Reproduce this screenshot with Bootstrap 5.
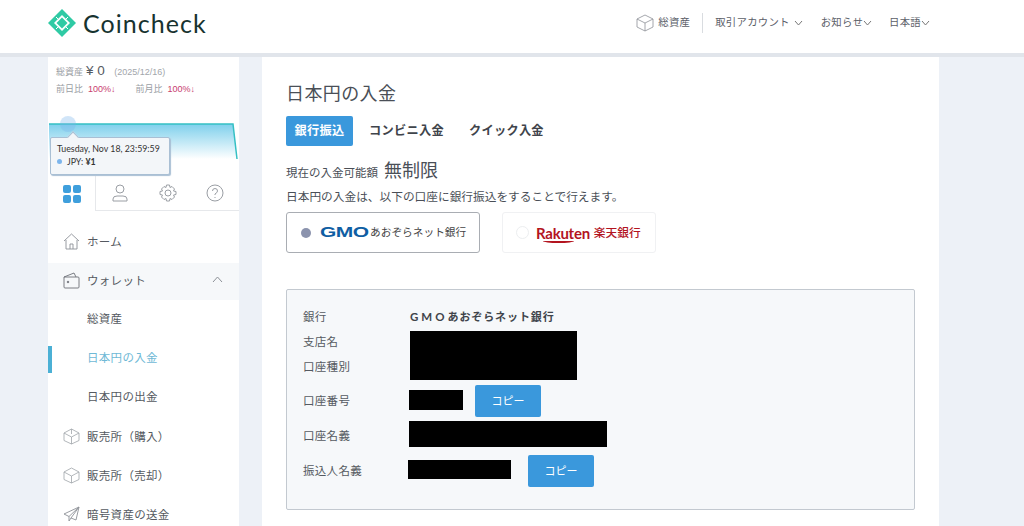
<!DOCTYPE html>
<html lang="ja">
<head>
<meta charset="utf-8">
<title>Coincheck</title>
<link href="https://cdn.jsdelivr.net/npm/bootstrap@5.3.0/dist/css/bootstrap.min.css" rel="stylesheet">
<style>
html,body{height:526px;overflow:hidden}
body{background:#edf1f7;font-family:"Lato","Noto Sans CJK JP",sans-serif;color:#4a4f57;font-size:12px}
.cc-top{height:57px;background:#fff;border-bottom:4px solid #e1e5eb;padding:0 94px 7px 48px}
.cc-brand{font-size:25px;letter-spacing:1.05px;color:#17332f;line-height:1}
.cc-topnav{font-size:10.4px;color:#5b6068;letter-spacing:.25px}
.cc-sep{width:1px;height:20px;background:#d9dce0;margin:0 12px}
.cc-wrap{padding-left:48px;gap:23px}
.cc-side{width:191px;height:469px;background:#fff;overflow:hidden;flex:none}
.cc-main{width:677px;height:469px;background:#fff;flex:none;padding:24px 24px 0}
.cc-stats{height:66px;padding:7px 0 0 8px;font-family:"Liberation Sans","Noto Sans CJK JP",sans-serif;font-size:9px;color:#9a9ea4;line-height:13px}
.cc-stats .cc-yen{font-size:13.5px;color:#555a61;margin:0 7px 0 3px}
.cc-stats .cc-down{color:#c8406f}
.cc-date{color:#a2a6ab;font-size:9px}
.cc-gap1{margin-left:20px}
.cc-chart{height:53px;position:relative}
.cc-chart svg{display:block;overflow:visible}
.cc-tip{position:absolute;left:2px;top:14px;width:120px;height:38px;background:#f3f6f9;border:1px solid #a9bfd4;box-shadow:1px 1px 1px #a9bfd4;font-size:8.8px;color:#333;padding:4px 6px;line-height:13px;border-radius:2px;white-space:nowrap}
.cc-tip::before{content:"";position:absolute;left:18px;top:-5px;width:8px;height:8px;background:#f3f6f9;border-left:1px solid #a9bfd4;border-top:1px solid #a9bfd4;transform:rotate(45deg)}
.cc-dot{display:inline-block;width:5px;height:5px;border-radius:50%;background:#7cb5ec;margin-right:5px;vertical-align:1px}
.cc-tabs{height:35px}
.cc-tabs>div{display:flex;align-items:center;justify-content:center;flex:1;border-bottom:1px solid #e6e8eb;height:35px}
.cc-tabs>div:first-child{border-bottom:0;border-right:1px solid #e6e8eb;flex:0 0 48px}
.cc-menu{padding-top:11px}
.cc-item{height:39px;display:flex;align-items:center;font-size:11.5px;color:#555a61;padding-left:15px;letter-spacing:.3px;position:relative}
.cc-item svg{margin-right:7px;flex:none}
.cc-item.cc-sub{padding-left:39px;padding-bottom:1px}
.cc-item.cc-open{background:#f6f8fa;height:37px;margin-top:2px;padding-bottom:2px}
.cc-item.cc-now{color:#6fb9d6}
.cc-item.cc-now::before{content:"";position:absolute;left:0;top:7px;width:4px;height:27px;background:#4bb0d5}
.cc-chev{position:absolute;right:16px;top:13px;margin-right:0!important}
.cc-title{font-size:18px;font-weight:400;color:#4a4f57;line-height:24px;margin:0 0 11px;letter-spacing:.4px}
.cc-pills{height:30px;font-size:12.2px;font-weight:700;color:#3f444b;align-items:center;letter-spacing:.3px}
.cc-pill{background:#3a98dc;color:#fff;width:67px;height:30px;border-radius:2px;display:flex;align-items:center;justify-content:center}
.cc-pillb1{margin-left:16px}
.cc-pillb2{margin-left:25px}
.cc-limit{font-size:11.5px;margin-top:12px;line-height:25px;height:25px}
.cc-limit span{font-size:18px;margin-left:3px}
.cc-desc{font-size:11.7px;line-height:18px;margin-top:4px}
.cc-banks{gap:22px;margin-top:7px}
.cc-bank{height:41px;background:#fff;border-radius:3px;display:flex;align-items:center}
.cc-bank1{width:194px;border:1px solid #a9adb3;padding-left:14px}
.cc-bank2{width:154px;border:1px solid #f0f1f3;padding-left:13px}
.cc-radio{width:10px;height:10px;border-radius:50%;flex:none;margin-right:9px}
.cc-radio.on{background:#8b93ad}
.cc-radio.off{width:13px;height:13px;border:1px solid #eceef0;margin-right:7px}
.cc-gmo{font-family:"Liberation Sans",sans-serif;font-weight:700;color:#0f5ea3;font-size:14px;transform:scaleX(1.5);transform-origin:left;display:inline-block;width:46px;letter-spacing:-.4px}
.cc-gmot{font-size:10.7px;color:#444;white-space:nowrap;margin-left:4px}
.cc-rak{font-family:"Lato",sans-serif;font-weight:700;color:#b3141f;font-size:15px;letter-spacing:-.25px;line-height:14px;white-space:nowrap;position:relative}
.cc-rak::after{content:"";position:absolute;left:7px;right:16px;bottom:-3px;height:2px;background:#b3141f;border-radius:0 0 50% 50%/0 0 100% 100%}
.cc-rakt{font-weight:500;color:#b3141f;font-size:11.7px;margin-left:4px;white-space:nowrap}
.cc-panel{margin-top:36px;width:629px;height:221px;background:#f6f8fa;border:1px solid #c3c9d0;border-radius:2px;padding:14px 0 0 16px;display:grid;grid-template-columns:105px 1fr;grid-template-rows:25px 25px 25px 44px 26px 44px;font-size:11.5px;color:#555a61;align-items:center;letter-spacing:.3px}
.cc-val{display:flex;align-items:center}
.cc-bname{font-weight:700;color:#3f444b;padding-left:2px;letter-spacing:.9px;font-size:11px}
.cc-bgmo{letter-spacing:3px;font-size:11.5px}
.cc-blk{background:#000;flex:none}
.cc-b1{grid-row:span 2;width:167px;height:49px;margin-left:2px;margin-top:3px}
.cc-b2{width:54px;height:20px;margin-left:1px;margin-top:-2px}
.cc-b3{width:198px;height:26px;margin-left:1px;margin-top:-4px}
.cc-b4{width:103px;height:19px;margin-top:-4px}
.cc-copy{background:#3a98dc;color:#fff;border:0;border-radius:2px;width:66px;height:32px;font-size:11px;padding:0}
.cc-c1{margin-left:12px}
.cc-c2{margin-left:17px}
</style>
</head>
<body>
<header class="cc-top d-flex align-items-center justify-content-between">
  <div class="d-flex align-items-center" style="gap:7px">
    <svg width="28" height="28" viewBox="0 0 28 28"><path d="M14 0 28 14 14 28 0 14Z" fill="#2fcaa4"/><path d="M14 6 22 14 14 22 6 14Z" fill="#fff"/><path d="M14 8.500 19.500 14 14 19.500 8.500 14Z" fill="#2fcaa4"/><path d="M8 8 10 10M20 8 18 10M8 20 10 18M20 20 18 18" stroke="#fff" stroke-width="1"/></svg>
    <span class="cc-brand">Coincheck</span>
  </div>
  <nav class="cc-topnav d-flex align-items-center">
    <svg width="18" height="18" viewBox="0 0 18 18" fill="none" stroke="#8d9197" stroke-width=".8"><path d="M9 1 17 5V13L9 17 1 13V5ZM1 5 9 9 17 5M9 9V17"/></svg>
    <span style="margin-left:4px">総資産</span>
    <span class="cc-sep"></span>
    <span>取引アカウント</span>
    <svg width="9" height="6" viewBox="0 0 9 6" fill="none" stroke="#777" class="ms-1"><path d="M1 1 4.500 5 8 1"/></svg>
    <span style="margin-left:18px">お知らせ</span>
    <svg width="9" height="6" viewBox="0 0 9 6" fill="none" stroke="#777"><path d="M1 1 4.500 5 8 1"/></svg>
    <span style="margin-left:17px">日本語</span>
    <svg width="9" height="6" viewBox="0 0 9 6" fill="none" stroke="#777"><path d="M1 1 4.500 5 8 1"/></svg>
  </nav>
</header>
<div class="cc-wrap d-flex">
  <aside class="cc-side">
    <div class="cc-stats">
      <div>総資産<span class="cc-yen">¥ 0</span> <span class="cc-date">(2025/12/16)</span></div>
      <div class="mt-1">前日比&nbsp; <span class="cc-down">100%↓</span><span class="cc-gap1">前月比</span>&nbsp; <span class="cc-down">100%↓</span></div>
    </div>
    <div class="cc-chart">
      <svg width="191" height="53" viewBox="0 0 191 53">
        <defs><linearGradient id="g" x1="0" x2="0" y1="0" y2="1"><stop offset="0" stop-color="#7fd0ec"/><stop offset="1" stop-color="#fff"/></linearGradient></defs>
        <path d="M1 1H185L189 36H1Z" fill="url(#g)"/>
        <path d="M1 1H185L189 36" fill="none" stroke="#35c0c4" stroke-width="1.500"/>
        <circle cx="20" cy="1" r="8" fill="#7cb5ec" opacity=".35"/>
      </svg>
      <div class="cc-tip">
        <div>Tuesday, Nov 18, 23:59:59</div>
        <div><span class="cc-dot"></span>JPY: <b>¥1</b></div>
      </div>
    </div>
    <div class="cc-tabs d-flex">
      <div><svg width="18" height="18" viewBox="0 0 18 18" fill="#3f9fdc"><rect width="8" height="8" rx="2"/><rect x="10" width="8" height="8" rx="2"/><rect y="10" width="8" height="8" rx="2"/><rect x="10" y="10" width="8" height="8" rx="2"/></svg></div>
      <div><svg width="16" height="18" viewBox="0 0 16 18" fill="none" stroke="#9a9ea4"><circle cx="8" cy="5" r="4"/><path d="M1 17V15Q1 12 5 12H11Q15 12 15 15V17Z"/></svg></div>
      <div><svg width="18" height="18" viewBox="0 0 18 18" fill="none" stroke="#9a9ea4"><circle cx="9" cy="9" r="3"/><path d="M7.500 1H10.500L11 3.500 13 2.500 15.500 5 14.500 7 17 7.500V10.500L14.500 11 15.500 13 13 15.500 11 14.500 10.500 17H7.500L7 14.500 5 15.500 2.500 13 3.500 11 1 10.500V7.500L3.500 7 2.500 5 5 2.500 7 3.500Z"/></svg></div>
      <div><svg width="18" height="18" viewBox="0 0 18 18" fill="none" stroke="#9a9ea4"><circle cx="9" cy="9" r="8"/><path d="M6.500 7Q6.500 4.500 9 4.500T11.500 7Q11.500 8.500 9 10V11M9 13V14"/></svg></div>
    </div>
    <div class="cc-menu">
      <div class="cc-item"><svg width="17" height="17" viewBox="0 0 17 17" fill="none" stroke="#8d9197" stroke-width=".9"><path d="M1 8 8.500 1 16 8M3 7V16H14V7M7 16V11H10V16"/></svg>ホーム</div>
      <div class="cc-item cc-open"><svg width="17" height="17" viewBox="0 0 17 17" fill="none" stroke="#6d7177" stroke-width=".9"><path d="M1 5V15Q1 16 2 16H15Q16 16 16 15V6Q16 5 15 5H1L11 1 13 5"/><circle cx="5" cy="10" r=".8" fill="#6d7177"/></svg>ウォレット
        <svg class="cc-chev" width="11" height="7" viewBox="0 0 11 7" fill="none" stroke="#8d9197"><path d="M1 6 5.500 1 10 6"/></svg></div>
      <div class="cc-item cc-sub">総資産</div>
      <div class="cc-item cc-sub cc-now">日本円の入金</div>
      <div class="cc-item cc-sub">日本円の出金</div>
      <div class="cc-item"><svg width="17" height="17" viewBox="0 0 17 17" fill="none" stroke="#a0a4a9" stroke-width=".8"><path d="M8.500 1 16 5V12.500L8.500 16 1 12.500V5ZM1 5 8.500 9 16 5M8.500 9V16M8.500 1V6"/></svg>販売所（購入）</div>
      <div class="cc-item"><svg width="17" height="17" viewBox="0 0 17 17" fill="none" stroke="#a0a4a9" stroke-width=".8"><path d="M8.500 1 16 5V12.500L8.500 16 1 12.500V5ZM1 5 8.500 9 16 5M8.500 9V16"/></svg>販売所（売却）</div>
      <div class="cc-item"><svg width="17" height="17" viewBox="0 0 17 17" fill="none" stroke="#8d9197" stroke-width=".9"><path d="M16 1 1 8 6 10.500 16 1 8 12 13 14ZM6 10.500V15L8 12"/></svg>暗号資産の送金</div>
    </div>
  </aside>
  <main class="cc-main">
    <h1 class="cc-title">日本円の入金</h1>
    <div class="cc-pills d-flex">
      <div class="cc-pill">銀行振込</div>
      <div class="cc-pillb1">コンビニ入金</div>
      <div class="cc-pillb2">クイック入金</div>
    </div>
    <div class="cc-limit">現在の入金可能額 <span>無制限</span></div>
    <div class="cc-desc">日本円の入金は、以下の口座に銀行振込をすることで行えます。</div>
    <div class="cc-banks d-flex">
      <div class="cc-bank cc-bank1"><span class="cc-radio on"></span><span class="cc-gmo">GMO</span><span class="cc-gmot">あおぞらネット銀行</span></div>
      <div class="cc-bank cc-bank2"><span class="cc-radio off"></span><span class="cc-rak">Rakuten</span><span class="cc-rakt">楽天銀行</span></div>
    </div>
    <div class="cc-panel">
      <div>銀行</div><div class="cc-bname"><span class="cc-bgmo">GMO</span>あおぞらネット銀行</div>
      <div>支店名</div><div class="cc-blk cc-b1"></div>
      <div>口座種別</div>
      <div>口座番号</div><div class="cc-val"><span class="cc-blk cc-b2"></span><button class="btn cc-copy cc-c1">コピー</button></div>
      <div>口座名義</div><div class="cc-val"><span class="cc-blk cc-b3"></span></div>
      <div>振込人名義</div><div class="cc-val"><span class="cc-blk cc-b4"></span><button class="btn cc-copy cc-c2">コピー</button></div>
    </div>
  </main>
</div>
<script src="https://cdn.jsdelivr.net/npm/bootstrap@5.3.0/dist/js/bootstrap.bundle.min.js"></script>
</body>
</html>
